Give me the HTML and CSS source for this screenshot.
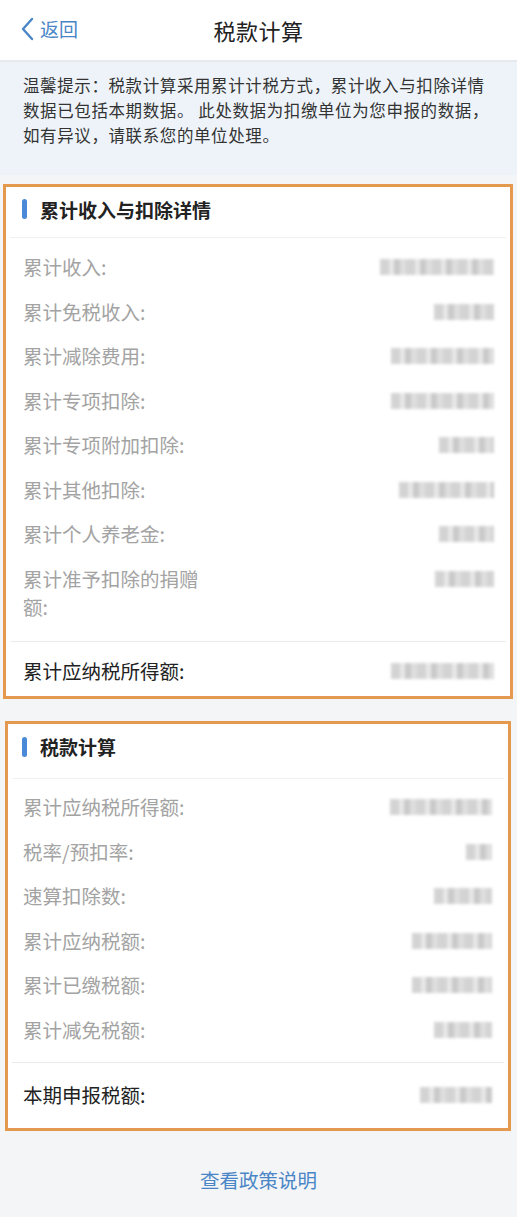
FILE: index.html
```html
<!DOCTYPE html>
<html lang="zh-CN">
<head>
<meta charset="utf-8">
<title>税款计算</title>
<link rel="stylesheet" href="styles.css">
</head>
<body>
<div class="page">
  <header class="nav">
    <a class="back">
      <svg class="chev" width="14" height="24" viewBox="0 0 14 24"><path d="M11 2 L2 12 L11 22" fill="none" stroke="#4a86c6" stroke-width="2.4" stroke-linecap="round" stroke-linejoin="round"/></svg>
      <span>返回</span>
    </a>
    <h1 class="nav-title">税款计算</h1>
  </header>

  <div class="notice">温馨提示：税款计算采用累计计税方式，累计收入与扣除详情数据已包括本期数据。 此处数据为扣缴单位为您申报的数据，如有异议，请联系您的单位处理。</div>

  <section class="card card-a">
    <div class="card-head"><span class="bar"></span>累计收入与扣除详情</div>
    <div class="list">
      <div class="row"><span class="label">累计收入:</span><span class="val" style="width:114px"></span></div>
      <div class="row"><span class="label">累计免税收入:</span><span class="val" style="width:60px"></span></div>
      <div class="row"><span class="label">累计减除费用:</span><span class="val" style="width:103px"></span></div>
      <div class="row"><span class="label">累计专项扣除:</span><span class="val" style="width:103px"></span></div>
      <div class="row"><span class="label">累计专项附加扣除:</span><span class="val" style="width:55px"></span></div>
      <div class="row"><span class="label">累计其他扣除:</span><span class="val" style="width:95px"></span></div>
      <div class="row"><span class="label">累计个人养老金:</span><span class="val" style="width:55px"></span></div>
      <div class="row"><span class="label">累计准予扣除的捐赠额:</span><span class="val" style="width:59px"></span></div>
    </div>
    <div class="row total"><span class="label">累计应纳税所得额:</span><span class="val" style="width:103px"></span></div>
  </section>

  <section class="card card-b">
    <div class="card-head"><span class="bar"></span>税款计算</div>
    <div class="list">
      <div class="row"><span class="label">累计应纳税所得额:</span><span class="val" style="width:102px"></span></div>
      <div class="row"><span class="label">税率/预扣率:</span><span class="val" style="width:26px"></span></div>
      <div class="row"><span class="label">速算扣除数:</span><span class="val" style="width:58px"></span></div>
      <div class="row"><span class="label">累计应纳税额:</span><span class="val" style="width:80px"></span></div>
      <div class="row"><span class="label">累计已缴税额:</span><span class="val" style="width:80px"></span></div>
      <div class="row"><span class="label">累计减免税额:</span><span class="val" style="width:58px"></span></div>
    </div>
    <div class="row total"><span class="label">本期申报税额:</span><span class="val" style="width:72px"></span></div>
  </section>

  <a class="policy">查看政策说明</a>
</div>
</body>
</html>
```

FILE: styles.css
```css
html, body {
  margin: 0;
  padding: 0;
  background: #f4f5f7;
}
body {
  font-family: "Noto Sans CJK SC", "Noto Sans", sans-serif;
  color: #222;
}
.page {
  display: flex;
  flex-direction: column;
  min-height: 1217px;
}
.nav {
  height: 60px;
  background: #fff;
  border-bottom: 2px solid #e8e9ec;
  display: flex;
  align-items: center;
  justify-content: center;
  position: relative;
}
.back {
  position: absolute;
  left: 21px;
  top: 17px;
  display: flex;
  align-items: center;
  gap: 5px;
  color: #4a86c6;
  font-size: 19px;
  line-height: 24px;
}
.nav-title {
  margin: 0;
  font-size: 22px;
  font-weight: 400;
  color: #222;
  letter-spacing: 0.5px;
}
.notice {
  background: #eef3fa;
  padding: 11px 20px 27px 23px;
  font-size: 16.5px;
  line-height: 25px;
  letter-spacing: 0.6px;
  color: #333;
}
.card {
  background: #fff;
  border: 3px solid #e4994f;
  display: flex;
  flex-direction: column;
}
.card-a {
  margin: 9px 4px 0 3px;
}
.card-b {
  margin: 22px 6px 0 5px;
}
.card-head {
  box-sizing: border-box;
  height: 51px;
  padding-bottom: 6px;
  display: flex;
  align-items: center;
  gap: 13px;
  font-size: 19px;
  font-weight: 700;
  color: #222;
  border-bottom: 1px solid #f0f1f3;
  margin: 0 4px;
  padding-left: 12px;
}
.card-b .card-head {
  height: 55px;
  padding-bottom: 9px;
  padding-left: 10px;
}
.bar {
  width: 5px;
  height: 20px;
  border-radius: 3px;
  background: #4a89d8;
}
.list {
  padding: 7px 0 12px;
  margin: 0 4px;
  border-bottom: 1px solid #ebecef;
}
.card-b .list {
  padding-top: 6px;
  padding-bottom: 10px;
}
.row {
  display: flex;
  justify-content: space-between;
  align-items: flex-start;
  padding: 8.25px 12px 8.25px 13px;
}
.card-b .row {
  padding-left: 11px;
}
.label {
  font-size: 19.5px;
  line-height: 28px;
  color: #a3a3a3;
  max-width: 195px;
}
.val {
  height: 16px;
  margin-top: 6px;
  background: repeating-linear-gradient(90deg, #c9c9c9 0 9px, #e2e2e2 9px 14px, #bdbdbd 14px 20px, #d6d6d6 20px 26px);
  filter: blur(1.6px);
  opacity: 0.8;
}
.total {
  margin: 0 4px;
  padding-top: 15px;
  padding-bottom: 11px;
}
.total .label {
  color: #222;
  max-width: none;
}
.card-b .total {
  padding-top: 18px;
  padding-bottom: 19px;
}
.policy {
  align-self: center;
  margin-top: 35px;
  font-size: 19.5px;
  line-height: 28px;
  color: #4a86c6;
}
```
